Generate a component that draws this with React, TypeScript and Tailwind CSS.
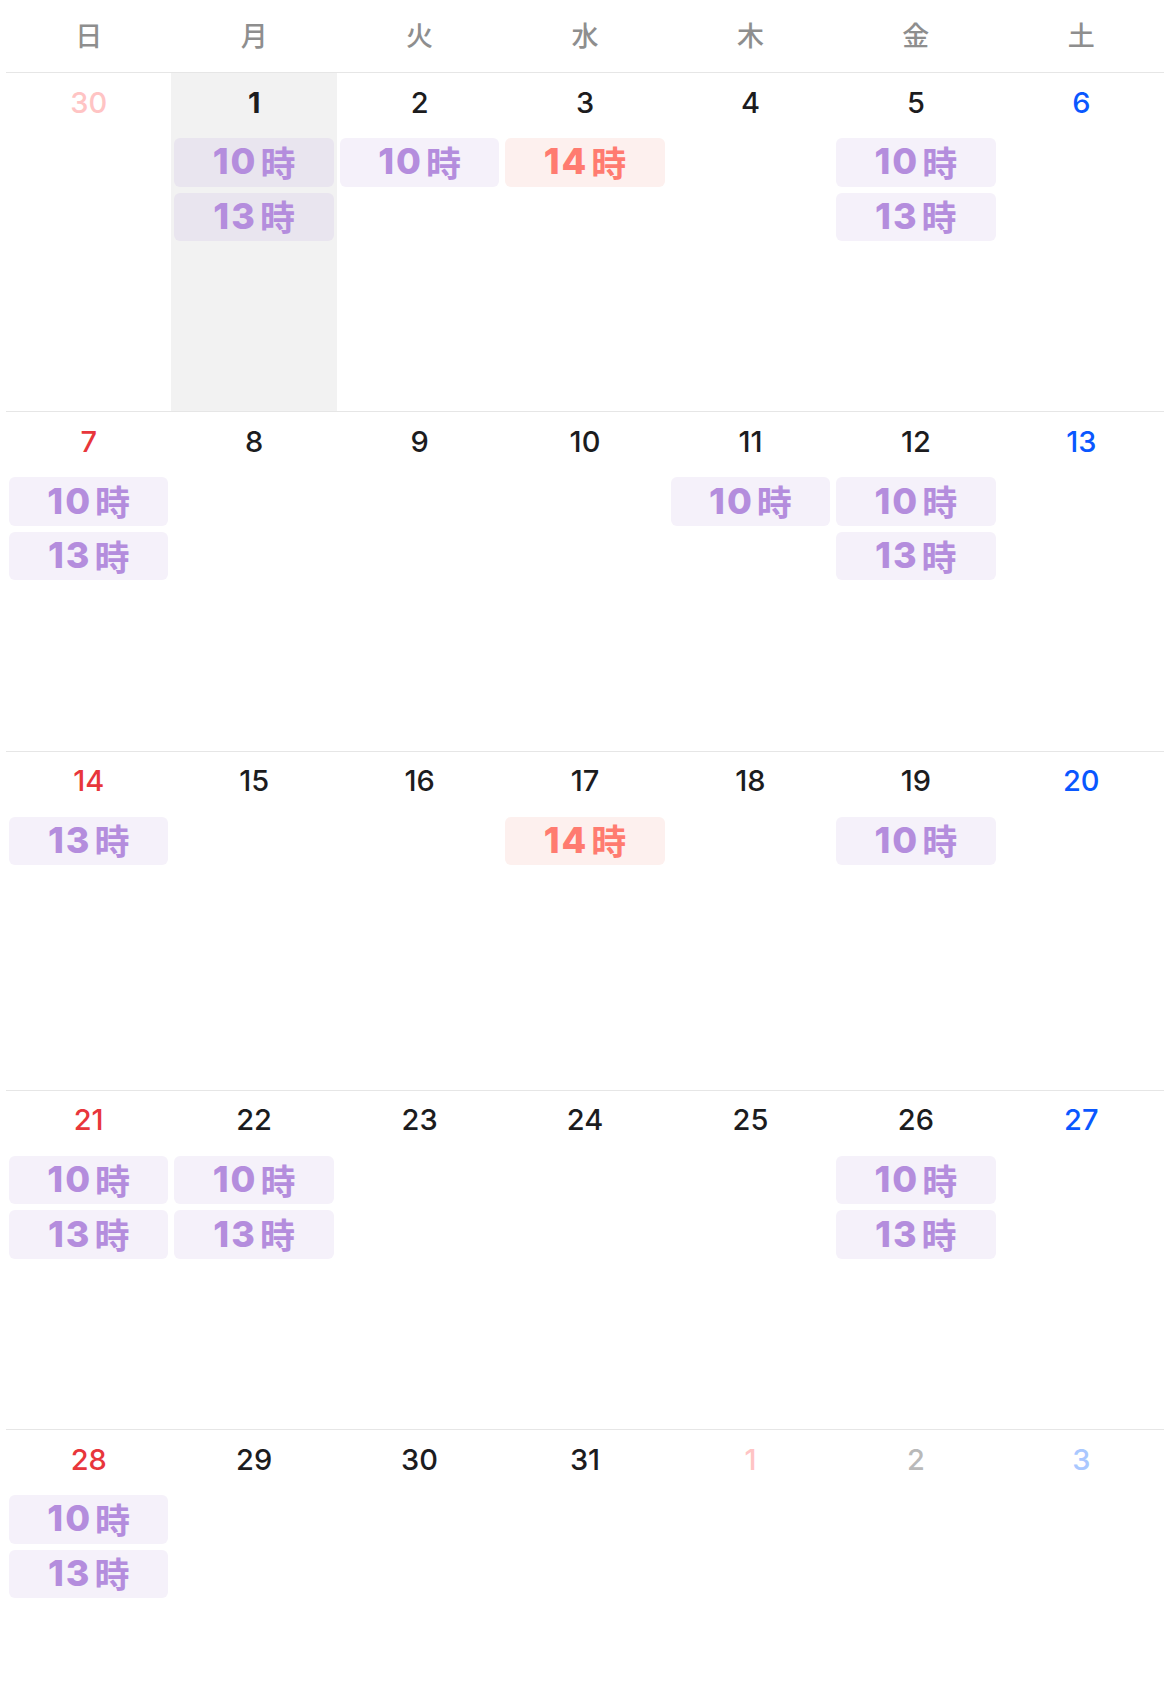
import React from "react";

type Ev = { t: string; red?: boolean };
type Day = { d: number; kind: "sun" | "sat" | "norm"; other?: boolean; today?: boolean; ev?: Ev[] };

const P = (t: string): Ev => ({ t });
const R = (t: string): Ev => ({ t, red: true });

const weeks: Day[][] = [
  [
    { d: 30, kind: "sun", other: true },
    { d: 1, kind: "norm", today: true, ev: [P("10"), P("13")] },
    { d: 2, kind: "norm", ev: [P("10")] },
    { d: 3, kind: "norm", ev: [R("14")] },
    { d: 4, kind: "norm" },
    { d: 5, kind: "norm", ev: [P("10"), P("13")] },
    { d: 6, kind: "sat" },
  ],
  [
    { d: 7, kind: "sun", ev: [P("10"), P("13")] },
    { d: 8, kind: "norm" },
    { d: 9, kind: "norm" },
    { d: 10, kind: "norm" },
    { d: 11, kind: "norm", ev: [P("10")] },
    { d: 12, kind: "norm", ev: [P("10"), P("13")] },
    { d: 13, kind: "sat" },
  ],
  [
    { d: 14, kind: "sun", ev: [P("13")] },
    { d: 15, kind: "norm" },
    { d: 16, kind: "norm" },
    { d: 17, kind: "norm", ev: [R("14")] },
    { d: 18, kind: "norm" },
    { d: 19, kind: "norm", ev: [P("10")] },
    { d: 20, kind: "sat" },
  ],
  [
    { d: 21, kind: "sun", ev: [P("10"), P("13")] },
    { d: 22, kind: "norm", ev: [P("10"), P("13")] },
    { d: 23, kind: "norm" },
    { d: 24, kind: "norm" },
    { d: 25, kind: "norm" },
    { d: 26, kind: "norm", ev: [P("10"), P("13")] },
    { d: 27, kind: "sat" },
  ],
  [
    { d: 28, kind: "sun", ev: [P("10"), P("13")] },
    { d: 29, kind: "norm" },
    { d: 30, kind: "norm" },
    { d: 31, kind: "norm" },
    { d: 1, kind: "sun", other: true },
    { d: 2, kind: "norm", other: true },
    { d: 3, kind: "sat", other: true },
  ],
];

const heads = ["日", "月", "火", "水", "木", "金", "土"];

function numColor(day: Day) {
  if (day.other) {
    if (day.kind === "sun") return "text-[#ffc4c4]";
    if (day.kind === "sat") return "text-[#a9c8ff]";
    return "text-[#b9b9b9]";
  }
  if (day.kind === "sun") return "text-[#e8363b]";
  if (day.kind === "sat") return "text-[#0a57ff]";
  return "text-[#1c1c1e]";
}

function Chip({ ev, today }: { ev: Ev; today?: boolean }) {
  const bg = ev.red ? "bg-[#fdf0ee]" : today ? "bg-[#e9e5ef]" : "bg-[#f5f1fa]";
  const fg = ev.red ? "text-[#ff7b70]" : "text-[#b48ddd]";
  return (
    <div className={`mx-[3px] h-[48.5px] rounded-[6px] flex items-center justify-center pb-[2px] ${bg}`}>
      <span className={`${fg} leading-none flex items-center`}>
        <span className="font-['Inter','Noto_Sans_CJK_JP',sans-serif] text-[36px] font-extrabold tracking-[2px]">
          {ev.t}
        </span>
        <span className="ml-[3px] font-['Noto_Sans_CJK_JP',sans-serif] text-[35px] font-bold">時</span>
      </span>
    </div>
  );
}

export default function App() {
  return (
    <div className="w-[1170px] h-[1707px] overflow-hidden bg-white px-[6px] font-['Inter','Noto_Sans_CJK_JP',sans-serif]">
      <div className="grid grid-cols-7 h-[73px] border-b border-[#e6e6e6]">
        {heads.map((h) => (
          <div
            key={h}
            className="flex items-center justify-center pb-[1px] text-[27px] font-medium text-[#8e8e8e] font-['Noto_Sans_CJK_JP',sans-serif]"
          >
            {h}
          </div>
        ))}
      </div>
      {weeks.map((w, wi) => (
        <div key={wi} className="grid grid-cols-7 h-[339.3px] border-b border-[#e6e6e6]">
          {w.map((day, di) => (
            <div key={di} className={`flex flex-col ${day.today ? "bg-[#f2f2f2]" : ""}`}>
              <div
                className={`h-[36px] mt-[11px] flex items-center justify-center text-[29px] leading-none ${
                  day.today ? "font-bold" : "font-medium"
                } ${numColor(day)}`}
              >
                {day.d}
              </div>
              <div className="mt-[18px] flex flex-col gap-[6px]">
                {(day.ev || []).map((e, ei) => (
                  <Chip key={ei} ev={e} today={day.today} />
                ))}
              </div>
            </div>
          ))}
        </div>
      ))}
    </div>
  );
}
